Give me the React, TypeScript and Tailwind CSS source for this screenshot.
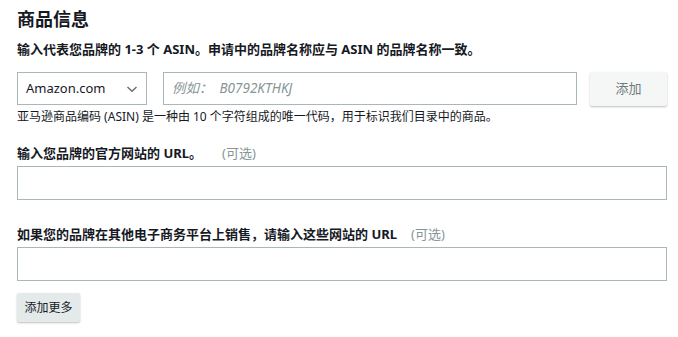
const font = { fontFamily: '"Noto Sans", "Noto Sans CJK SC", sans-serif' };

export default function App() {
  return (
    <div className="min-h-screen bg-white text-[#16191f] pl-[17px] pr-[11px] pt-[7px]" style={font}>
      <h2 className="text-[18px] leading-[24px] font-bold">商品信息</h2>
      <p className="mt-[9px] text-[13px] leading-[18px] font-bold">
        输入代表您品牌的 1-3 个 ASIN。申请中的品牌名称应与 ASIN 的品牌名称一致。
      </p>

      <div className="mt-[14px] flex items-start">
        <div className="w-[130px] h-[33px] border border-[#aab7b8] flex items-center justify-between pl-[8px] pr-[8px] text-[13px]">
          <span>Amazon.com</span>
          <svg width="12" height="8" viewBox="0 0 12 8" fill="none" stroke="#687078" strokeWidth="1.5">
            <path d="M1.5 2 L6 6.2 L10.5 2" />
          </svg>
        </div>
        <div className="ml-[16px] flex-1 h-[33px] border border-[#aab7b8] flex items-center pl-[8px] text-[13.5px] italic text-[#879596]">
          例如：&nbsp;&nbsp;B0792KTHKJ
        </div>
        <button className="ml-[13px] w-[77px] h-[34px] bg-[#f5f7f7] rounded-[2px] shadow-[0_1px_2px_rgba(0,0,0,0.25)] text-[13px] text-[#6f7a7c]">
          添加
        </button>
      </div>
      <p className="mt-[2px] text-[12px] leading-[18px]">
        亚马逊商品编码 (ASIN) 是一种由 10 个字符组成的唯一代码，用于标识我们目录中的商品。
      </p>

      <div className="mt-[18px] text-[13px] leading-[18px]">
        <span className="font-bold">输入您品牌的官方网站的 URL。</span>
        <span className="ml-[20px] text-[#879596]">(可选)</span>
      </div>
      <div className="mt-[4px] h-[34px] border border-[#aab7b8]" />

      <div className="mt-[25px] text-[13px] leading-[18px]">
        <span className="font-bold">如果您的品牌在其他电子商务平台上销售，请输入这些网站的 URL</span>
        <span className="ml-[14px] text-[#879596]">(可选)</span>
      </div>
      <div className="mt-[4px] h-[34px] border border-[#aab7b8]" />

      <button className="mt-[12px] w-[63px] h-[29px] bg-[#e4e9ea] rounded-[2px] shadow-[0_1px_2px_rgba(0,0,0,0.25)] text-[12px] text-[#16191f]">
        添加更多
      </button>
    </div>
  );
}
